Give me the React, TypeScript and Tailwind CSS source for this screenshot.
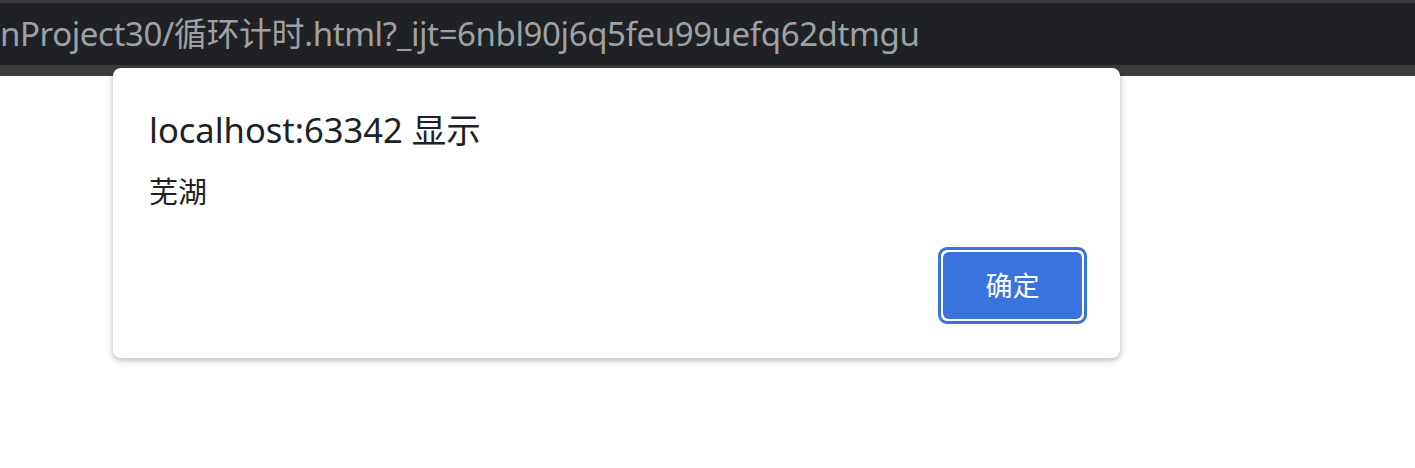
import React from "react";

export default function App() {
  const font = { fontFamily: '"Noto Sans", "Noto Sans CJK SC", sans-serif' };
  return (
    <div className="relative w-[1415px] h-[468px] bg-white overflow-hidden" style={font}>
      <div className="h-[3px] bg-[#3a3b3d]" />
      <div className="h-[62px] bg-[#202124] flex items-center overflow-hidden whitespace-nowrap">
        <span className="text-[33px] leading-[44px] text-[#9fa1a5] tracking-[-0.4px]">
          nProject30/循环计时.html?_ijt=6nbl90j6q5feu99uefq62dtmgu
        </span>
      </div>
      <div className="h-[11px] bg-[#3c3c3c]" />

      <div className="absolute left-[113px] top-[68px] w-[1007px] h-[290px] bg-white rounded-[8px] shadow-[0_2px_6px_rgba(0,0,0,0.3)] flex flex-col px-[36px] pt-[40px]">
        <div className="text-[34.5px] leading-[44px] text-[#202124]">localhost:63342 显示</div>
        <div className="mt-[22px] text-[29px] leading-[36px] text-[#202124]">芜湖</div>
        <div className="flex justify-end mt-[37px]">
          <div className="mr-[-3px] rounded-[9px] border-[3px] border-[#3b73de] p-[2px] bg-white">
            <button className="w-[139px] h-[67px] rounded-[6px] bg-[#3b73de] text-white text-[27px] leading-none flex items-center justify-center">
              确定
            </button>
          </div>
        </div>
      </div>
    </div>
  );
}
